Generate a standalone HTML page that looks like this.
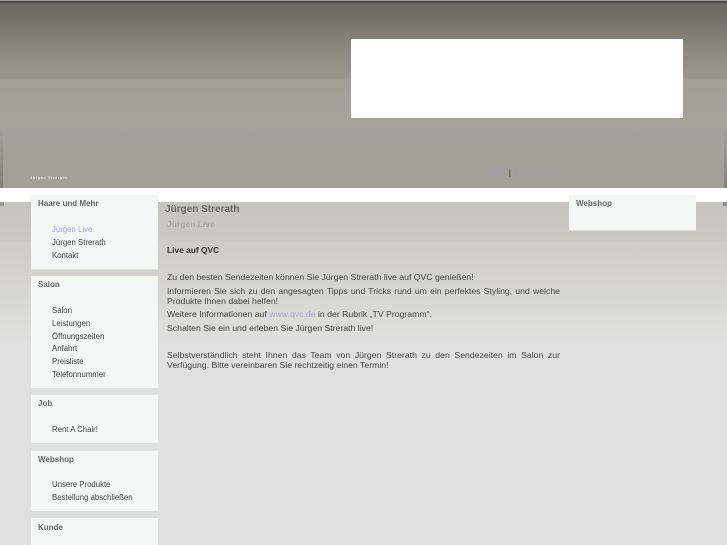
<!DOCTYPE html>
<html lang="de"><head><meta charset="utf-8"><title>Jürgen Strerath</title>
<style>
html,body{margin:0;padding:0;width:727px;height:545px;overflow:hidden;background:#e0e0e0}
body{position:relative;font-family:"Liberation Sans",sans-serif;font-size:8.7px;color:#444}
div,a,span{position:absolute;white-space:nowrap}
a{text-decoration:none;color:inherit}
#hd{left:0;top:0;width:727px;height:188px;background:linear-gradient(#6d6a61 0,#6f6c63 10px,#7d7a70 30px,#8c897f 50px,#9a978d 78px,#a3a096 80px,#a5a298 120px,#a3a096 188px)}
#tl{left:0;top:0;width:727px;height:3px;background:linear-gradient(#9a9a94 0,#9a9a94 1px,#4c4c46 1px,#4c4c46 3px)}
#w{left:351px;top:39px;width:332px;height:79px;background:#fff}
#wb{left:0;top:188px;width:727px;height:14px;background:#fff}
#bg{left:0;top:202px;width:727px;height:343px;background:linear-gradient(#c5c4bf 0,#c9c8c3 38px,#cecdc8 40px,#d1d0cc 62px,#d6d6d3 90px,#dcdcda 120px,#e0e0e0 145px,#e0e0e0 343px)}
.b{left:31px;width:127px;background:#f5f7f6;box-shadow:0 1px 0 #dededa}
.h{left:38px;font-size:8px;font-weight:bold;color:#666;line-height:12px;filter:blur(.3px)}
.n{left:52px;font-size:7.8px;color:#444;line-height:12px;filter:blur(.3px)}
.t{left:167px;color:#444;line-height:12px;filter:blur(.3px)}
.j{width:393px;text-align:justify;text-align-last:justify;white-space:normal}
</style></head><body>
<div id="hd"></div><div id="tl"></div><div id="w"></div>
<div style="left:0;top:130px;width:3px;height:58px;background:linear-gradient(#a3a096,#84827a)"></div>
<div style="left:724px;top:130px;width:3px;height:58px;background:linear-gradient(#a3a096,#84827a)"></div>
<div style="left:30px;top:175px;font-size:4px;line-height:6px;font-weight:bold;color:#e4e3de;letter-spacing:.5px;filter:blur(.3px)">Jürgen Strerath</div>
<div style="left:487px;top:166px;font-size:9px;line-height:12px;color:#9c9bb0;filter:blur(.3px)"><a href="#" style="position:static">AGB</a> <span style="position:static;color:#666;font-weight:bold">|</span> <a href="#" style="position:static">Impressum</a></div>
<div id="wb"></div><div id="bg"></div>
<div style="left:0;top:202px;width:4px;height:4px;background:#9a9a96"></div>
<div style="left:723px;top:202px;width:4px;height:4px;background:#8e8e8a"></div>

<div class="b" style="top:195px;height:74px"></div>
<div class="b" style="top:276px;height:112px"></div>
<div class="b" style="top:395px;height:48px"></div>
<div class="b" style="top:451px;height:60px"></div>
<div class="b" style="top:518px;height:40px"></div>
<div class="b" style="left:569px;top:195px;height:35px"></div>

<div class="h" style="top:198px">Haare und Mehr</div>
<a class="n" href="#" style="top:224px;color:#a5a3cf">Jürgen Live</a>
<a class="n" href="#" style="top:237px">Jürgen Strerath</a>
<a class="n" href="#" style="top:250px">Kontakt</a>

<div class="h" style="top:279px">Salon</div>
<a class="n" href="#" style="top:305px">Salon</a>
<a class="n" href="#" style="top:318px">Leistungen</a>
<a class="n" href="#" style="top:331px">Öffnungszeiten</a>
<a class="n" href="#" style="top:343px">Anfahrt</a>
<a class="n" href="#" style="top:356px">Preisliste</a>
<a class="n" href="#" style="top:369px">Telefonnummer</a>

<div class="h" style="top:398px">Job</div>
<a class="n" href="#" style="top:424px">Rent A Chair!</a>

<div class="h" style="top:454px">Webshop</div>
<a class="n" href="#" style="top:479px">Unsere Produkte</a>
<a class="n" href="#" style="top:492px">Bestellung abschließen</a>

<div class="h" style="top:522px">Kunde</div>
<div class="h" style="left:576px;top:198px">Webshop</div>

<div style="left:165px;top:202px;font-size:10px;line-height:15px;font-weight:bold;color:#666;filter:blur(.3px)">Jürgen Strerath</div>
<div style="left:167px;top:218px;font-size:8.5px;line-height:12px;font-weight:bold;color:#a9a9a6;filter:blur(.3px)">Jürgen Live</div>
<div class="t" style="top:244px;font-size:8.4px;font-weight:bold;color:#333">Live auf QVC</div>

<div class="t" style="top:271px">Zu den besten Sendezeiten können Sie Jürgen Strerath live auf QVC genießen!</div>
<div class="t j" style="top:285px">Informieren Sie sich zu den angesagten Tipps und Tricks rund um ein perfektes Styling, und welche</div>
<div class="t" style="top:295px">Produkte Ihnen dabei helfen!</div>
<div class="t" style="top:308px">Weitere Informationen auf <a href="#" style="position:static;color:#a5a3cf">www.qvc.de</a> in der Rubrik „TV Programm“.</div>
<div class="t" style="top:322px">Schalten Sie ein und erleben Sie Jürgen Strerath live!</div>
<div class="t j" style="top:349px">Selbstverständlich steht Ihnen das Team von Jürgen Strerath zu den Sendezeiten im Salon zur</div>
<div class="t" style="top:359px">Verfügung. Bitte vereinbaren Sie rechtzeitig einen Termin!</div>
</body></html>
